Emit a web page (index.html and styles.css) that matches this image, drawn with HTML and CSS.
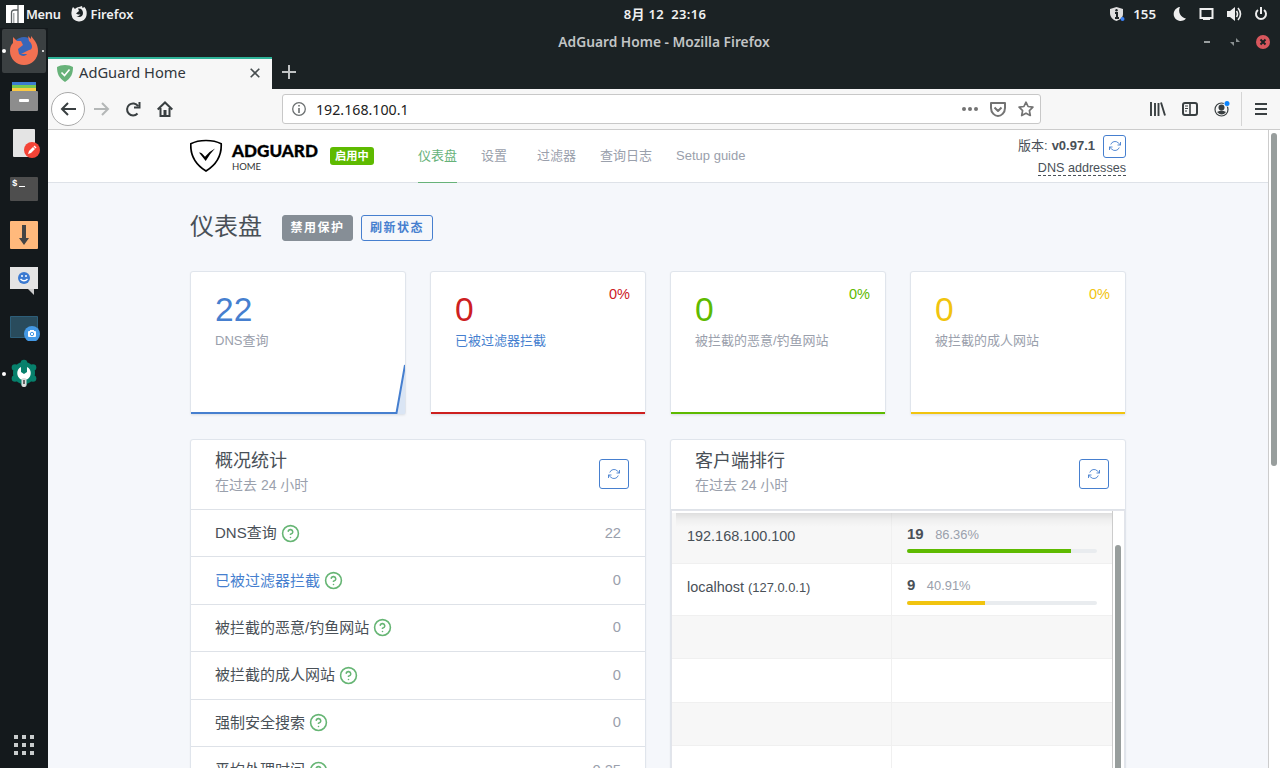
FILE: index.html
```html
<!DOCTYPE html>
<html lang="zh-CN">
<head>
<meta charset="utf-8">
<title>AdGuard Home</title>
<link rel="stylesheet" href="styles.css">
</head>
<body>
<svg width="0" height="0" class="defs">
  <symbol id="refresh" viewBox="0 0 24 24"><path d="M23 4v6h-6M1 20v-6h6M3.500 9a9 9 0 0 1 14.900-3.400L23 10M1 14l4.600 4.400A9 9 0 0 0 20.500 15" fill="none" stroke="currentColor" stroke-width="1.800"/></symbol>
  <symbol id="help" viewBox="0 0 24 24"><g fill="none" stroke="#66b574" stroke-width="2" stroke-linecap="round"><circle cx="12" cy="12" r="10"/><path d="M9.100 9a3 3 0 0 1 5.800 1c0 2-3 3-3 3M12 17h.01"/></g></symbol>
</svg>
<div class="desktop">
  <header class="panel">
    <div class="panel-left">
      <svg class="manjaro" viewBox="0 0 18 18"><path fill="#fff" d="M0 0h18v18H0z"/><path d="M5.500 18V8q0-3 3-3H12M12 0v18" fill="none" stroke="#5b6163" stroke-width="1.300"/><path fill="#a9adae" d="M7 8h1.500v10H7z"/></svg>
      <span class="menu-label">Menu</span>
      <svg class="fox-mono" viewBox="0 0 16 16"><path fill="#eee" d="M1 3l1-2 2 2c1-1 2-2 4-2l3-1 .5 2 2-1C16 4 16 7 15.400 10A7.600 7.600 0 0 1 .6 9C0 6 1 5 1 3z"/><path fill="#1b2224" d="M7 2.500C10 2 12 4 12 7c0 4-4 5-6.500 3 2 .5 3-.5 4-1.500H7L5 7.500 8 5z"/></svg>
      <span>Firefox</span>
    </div>
    <div class="clock">8月 12&nbsp; 23:16</div>
    <div class="panel-right">
      <svg width="16" height="16" viewBox="0 0 16 16"><path fill="#ddd" d="M7.500 1L14 3v5c0 4-4 6-6.500 7C4 14 1 11 1 7V3z"/><path d="M6 7h2v5M6 12h4" stroke="#1b2224" stroke-width="2" fill="none"/><circle cx="7.500" cy="4.200" r="1.200" fill="#1b2224"/><circle cx="13.500" cy="13" r="2" fill="#3b82f6"/></svg>
      <span class="count">155</span>
      <svg width="14" height="16" viewBox="0 0 14 16"><path fill="#eee" d="M7 1A8 8 0 0 0 13 12.500 7 7 0 1 1 7 1z"/></svg>
      <svg width="15" height="16" viewBox="0 0 15 16"><path d="M1.500 3h12v9h-12zM4 13h7" fill="none" stroke="#eee" stroke-width="2"/></svg>
      <svg width="16" height="16" viewBox="0 0 16 16"><path fill="#eee" d="M1 5h3l5-4v14l-5-4H1z"/><path d="M10.500 5q2 3 0 6M12 2q5 6 0 12" fill="none" stroke="#eee" stroke-width="1.600"/></svg>
      <svg width="14" height="16" viewBox="0 0 14 16"><path d="M4 4a5 5 0 1 0 6 0M7 1v7" fill="none" stroke="#eee" stroke-width="2"/></svg>
    </div>
  </header>
  <div class="body">
    <aside class="dock">
      <div class="slot active"><i class="dot"></i><i class="dot small"></i><svg width="28" height="29" viewBox="0 0 28 29"><circle cx="14" cy="13" r="12" fill="#3866b8"/><path fill="#f27152" d="M3 7V1l4 4h4l2 4-5 4 1 5c3 3 7 2 8 0h-6l8-4c4 0 4-6 0-9l-1-5 3 3V0c4 5 7 8 7 15A14 14 0 0 1 0 15c0-4 1-6 3-8z"/></svg></div>
      <div class="slot"><svg width="28" height="30" viewBox="0 0 28 30"><path fill="#3c7bd0" d="M2 1h24v4H2z"/><path fill="#78c850" d="M2 4h24v3H2z"/><path fill="#fbc944" d="M2 7h24v4H2z"/><rect y="10" width="28" height="20" rx="1" fill="#8d8d8d"/><rect x="9" y="18" width="10" height="3" rx="1" fill="#fff"/></svg></div>
      <div class="slot"><svg class="drop" width="32" height="30" viewBox="0 0 32 30"><rect x="5" y="1" width="22" height="28" rx="1" fill="#e4e4e4"/><circle cx="24" cy="22" r="8" fill="#f44336"/><path d="M20 26l1-3 4-4 2 2-4 4zM25.500 18.500l1-1 2 2-1 1z" fill="#fff"/></svg></div>
      <div class="slot"><svg width="28" height="24" viewBox="0 0 28 24"><rect width="28" height="24" rx="1" fill="#4e4e4e"/><text x="2" y="9" class="prompt">$</text><path d="M9 9.500h6" stroke="#fff"/></svg></div>
      <div class="slot"><svg width="28" height="28" viewBox="0 0 28 28"><rect width="28" height="28" rx="1" fill="#ffb97c"/><path d="M12 4h4v13h3l-5 7-5-7h3z" fill="#444"/></svg></div>
      <div class="slot"><svg width="28" height="28" viewBox="0 0 28 28"><path d="M0 0h28v22H0z" fill="#e4e4e4"/><path d="M18 22h6v6z" fill="#ccc"/><circle cx="14" cy="11" r="6" fill="#3b7ad1"/><path d="M10.500 12q3.500 3.500 7 0" fill="none" stroke="#fff" stroke-width="1.500"/><circle cx="12" cy="9" r="1" fill="#fff"/><circle cx="16" cy="9" r="1" fill="#fff"/></svg></div>
      <div class="slot"><svg width="32" height="28" viewBox="0 0 32 28"><path d="M2.500 3.500h27v21h-27z" fill="#294b5c" stroke="#2d5e79"/><circle cx="24" cy="21" r="8" fill="#4499e5"/><rect x="20" y="18" width="8" height="6" rx="1" fill="#fff"/><path d="M22 17h4v2h-4z" fill="#fff"/><circle cx="24" cy="21" r="1.700" fill="#fff" stroke="#4499e5"/></svg></div>
      <div class="slot"><i class="dot"></i><svg class="drop" width="28" height="30" viewBox="0 0 28 30"><circle cx="14" cy="14" r="11" fill="#07806c"/><g fill="#07806c"><circle cx="14" cy="4" r="3.300"/><circle cx="5" cy="8.500" r="3.300"/><circle cx="23" cy="8.500" r="3.300"/><circle cx="5" cy="19.500" r="3.300"/><circle cx="23" cy="19.500" r="3.300"/><circle cx="14" cy="24" r="3.300"/></g><path d="M11 8v5l3 2 3-2V8c5 2 5 10 0 12.500h-6C6 18 6 10 11 8z" fill="#fff"/><rect x="11.500" y="19" width="5" height="9" rx="2" fill="#ddd"/><path d="M14 21v4" stroke="#666" stroke-width="2"/></svg></div>
      <svg class="apps" width="20" height="20" viewBox="0 0 20 20"><path d="M0 2h20M0 10h20M0 18h20" stroke="#c9cccd" stroke-width="4" stroke-dasharray="4 4"/></svg>
    </aside>
    <main class="window">
      <div class="titlebar"><span>AdGuard Home - Mozilla Firefox</span>
        <svg class="controls" width="70" height="14" viewBox="0 0 70 14"><path d="M4 7h6" stroke="#9a9fa0" stroke-width="2"/><path d="M36 3v4h4zM34 11V7h-4z" fill="#8b9192"/><circle cx="63" cy="7" r="7" fill="#d8575d"/><path d="M60.500 4.500l5 5m0-5l-5 5" stroke="#1b2224" stroke-width="2"/></svg>
      </div>
      <div class="tabs">
        <div class="tab"><svg width="16" height="17" viewBox="0 0 16 17"><path fill="#67b279" d="M8 0q5 0 8 2c0 7-2 11-8 15C2 13 0 9 0 2q3-2 8-2z"/><path d="M4.500 7.500L7.500 10.500 12.500 4.500" fill="none" stroke="#fff" stroke-width="1.600"/></svg><span>AdGuard Home</span><svg class="close" width="10" height="10" viewBox="0 0 10 10"><path d="M.7.7l8.600 8.600m0-8.600L.7 9.300" stroke="#474d4f" stroke-width="1.600"/></svg></div>
        <svg class="plus" width="14" height="14" viewBox="0 0 14 14"><path d="M7 0v14M0 7h14" stroke="#c0c3c4" stroke-width="2"/></svg>
      </div>
      <div class="toolbar">
        <div class="back"><svg width="16" height="14" viewBox="0 0 16 14"><path d="M8 1L2 7l6 6M2 7h14" fill="none" stroke="#393f41" stroke-width="2"/></svg></div>
        <svg class="fwd" width="16" height="14" viewBox="0 0 16 14"><path d="M8 1l6 6-6 6M14 7H0" fill="none" stroke="#b4b7b7" stroke-width="2"/></svg>
        <svg class="reload" width="16" height="16" viewBox="0 0 16 16"><path d="M13 5A6 6 0 1 0 12.500 12.500M14.500 1v5.500H9" fill="none" stroke="#393f41" stroke-width="2"/></svg>
        <svg class="home" width="16" height="16" viewBox="0 0 16 16"><path d="M.7 8.500L8 1.500l7.300 7M3.500 7v8h9V7" fill="none" stroke="#393f41" stroke-width="2"/><path d="M6.500 9h3v6h-3z" fill="#393f41"/></svg>
        <div class="url">
          <svg width="14" height="14" viewBox="0 0 14 14"><circle cx="7" cy="7" r="6.300" fill="none" stroke="#6c7071" stroke-width="1.300"/><path d="M7 6v5M7 3v1.600" stroke="#6c7071" stroke-width="1.600"/></svg>
          <span>192.168.100.1</span>
          <svg class="dots" width="16" height="4" viewBox="0 0 16 4"><g fill="#737373"><circle cx="2" cy="2" r="2"/><circle cx="8" cy="2" r="2"/><circle cx="14" cy="2" r="2"/></g></svg>
          <svg width="16" height="15" viewBox="0 0 16 15"><path d="M1 1h14v5c0 5-4 8-7 8s-7-3-7-8zM4.500 5.500L8 9l3.500-3.500" fill="none" stroke="#737373" stroke-width="2" stroke-linejoin="round"/></svg>
          <svg width="16" height="16" viewBox="0 0 16 16"><path d="M8 1.200l2.100 4.300 4.800.7-3.500 3.400.9 4.900L8 12.200l-4.300 2.300.9-4.900L1.100 6.200l4.800-.7z" fill="none" stroke="#737373" stroke-width="1.700" stroke-linejoin="round"/></svg>
        </div>
        <div class="tools">
          <svg width="16" height="14" viewBox="0 0 16 14"><path d="M1 0v14M5 1v13M8.500 1v13M11 .5L15 13.500" stroke="#393f41" stroke-width="1.900"/></svg>
          <svg width="16" height="14" viewBox="0 0 16 14"><rect x="1" y="1" width="14" height="12" rx="2" fill="none" stroke="#393f41" stroke-width="2"/><path d="M8 1v12" stroke="#393f41" stroke-width="1.600"/><path d="M3 4h3M3 6.500h3M3 9h2" stroke="#393f41"/></svg>
          <svg width="16" height="16" viewBox="0 0 16 16"><circle cx="7.500" cy="8.500" r="6.500" fill="none" stroke="#393f41" stroke-width="1.200"/><circle cx="7.500" cy="6.500" r="3" fill="#393f41"/><path d="M3 11q4.500-3 9 0-4 5-9 0z" fill="#393f41"/><circle cx="13" cy="2.500" r="3.200" fill="#f7f7f7"/><circle cx="13" cy="2.500" r="2.500" fill="#0a84ff"/></svg>
          <i class="sep"></i>
          <svg width="12" height="12" viewBox="0 0 12 12"><path d="M0 1h12M0 6h12M0 11h12" stroke="#393f41" stroke-width="2"/></svg>
        </div>
      </div>
      <div class="viewport">
        <div class="page">
          <div class="site-head"><div class="container head-row">
            <svg class="logo" width="130" height="34" viewBox="0 0 130 34"><path d="M16 1.500q9 0 15.200 3.300Q32 22 16 32 0 22 .8 4.800 7 1.500 16 1.500z" fill="none" stroke="#000" stroke-width="1.700"/><path d="M9 13.500q2 0 3 1l3 3.200Q19 12.500 25 9.500q-5 5-9.300 12.500z"/><text x="42" y="18.300" class="brand" textLength="86" lengthAdjust="spacingAndGlyphs">ADGUARD</text><text x="42" y="30.500" class="brand-sub" textLength="29" lengthAdjust="spacing">HOME</text></svg>
            <span class="badge">启用中</span>
            <nav class="nav"><a class="on">仪表盘</a><a>设置</a><a>过滤器</a><a>查询日志</a><a>Setup guide</a></nav>
            <div class="version"><div class="ver-row">版本: <b>v0.97.1</b><span class="rbtn mini"><svg width="12" height="12"><use href="#refresh"/></svg></span></div><span class="addr">DNS addresses</span></div>
          </div></div>
          <div class="container">
            <div class="page-title"><h1>仪表盘</h1><span class="btn gray">禁用保护</span><span class="btn outline">刷新状态</span></div>
            <div class="stats">
              <div class="card stat blue"><div class="num">22</div><div class="lbl">DNS查询</div><svg class="chart" viewBox="0 0 214 50" width="214" height="50"><path d="M205.500 49L214 1V50H205z" fill="#dae5f4"/><path d="M0 49h205.500L214 1" fill="none" stroke="#467fcf" stroke-width="2"/></svg></div>
              <div class="card stat red"><div class="pct">0%</div><div class="num">0</div><div class="lbl link">已被过滤器拦截</div><div class="line"></div></div>
              <div class="card stat green"><div class="pct">0%</div><div class="num">0</div><div class="lbl">被拦截的恶意/钓鱼网站</div><div class="line"></div></div>
              <div class="card stat yellow"><div class="pct">0%</div><div class="num">0</div><div class="lbl">被拦截的成人网站</div><div class="line"></div></div>
            </div>
            <div class="panels">
              <section class="card box">
                <div class="box-head"><div><h2>概况统计</h2><p>在过去 24 小时</p></div><span class="rbtn"><svg width="12" height="12"><use href="#refresh"/></svg></span></div>
                <div class="row"><span>DNS查询</span><svg class="q"><use href="#help"/></svg><em>22</em></div>
                <div class="row"><span class="link">已被过滤器拦截</span><svg class="q"><use href="#help"/></svg><em>0</em></div>
                <div class="row"><span>被拦截的恶意/钓鱼网站</span><svg class="q"><use href="#help"/></svg><em>0</em></div>
                <div class="row"><span>被拦截的成人网站</span><svg class="q"><use href="#help"/></svg><em>0</em></div>
                <div class="row"><span>强制安全搜索</span><svg class="q"><use href="#help"/></svg><em>0</em></div>
                <div class="row"><span>平均处理时间</span><svg class="q"><use href="#help"/></svg><em>0.25</em></div>
              </section>
              <section class="card box">
                <div class="box-head"><div><h2>客户端排行</h2><p>在过去 24 小时</p></div><span class="rbtn"><svg width="12" height="12"><use href="#refresh"/></svg></span></div>
                <div class="table">
                  <div class="rows">
                    <div class="tr first odd"><div class="td">192.168.100.100</div><div class="td"><div class="val"><b>19</b><small>86.36%</small></div><div class="bar"><i class="g" style="width:86.36%"></i></div></div></div>
                    <div class="tr second"><div class="td">localhost&nbsp;<small>(127.0.0.1)</small></div><div class="td"><div class="val"><b>9</b><small>40.91%</small></div><div class="bar"><i class="y" style="width:40.91%"></i></div></div></div>
                    <div class="tr odd"><div class="td"></div><div class="td"></div></div>
                    <div class="tr"><div class="td"></div><div class="td"></div></div>
                    <div class="tr odd"><div class="td"></div><div class="td"></div></div>
                    <div class="tr"><div class="td"></div><div class="td"></div></div>
                  </div>
                  <div class="inner-scroll"><i></i></div>
                </div>
              </section>
            </div>
          </div>
        </div>
        <div class="scroll"><i></i></div>
      </div>
    </main>
  </div>
</div>
</body>
</html>
```
FILE: styles.css
```css
* { box-sizing: border-box; }
body { margin: 0; width: 1280px; height: 768px; overflow: hidden; font-family: "Liberation Sans", "Noto Sans CJK SC", sans-serif; }
svg { display: block; flex: none; }
.defs { position: absolute; }
h1, h2, p { margin: 0; font-weight: 400; }
em, i { font-style: normal; }
.desktop { height: 768px; display: flex; flex-direction: column; background: #1b2224; }

.panel { height: 28px; flex: none; display: grid; grid-template-columns: 1fr auto 1fr; align-items: center; padding: 0 12px 0 6px; color: #f0f1f1; font: 600 12.800px/28px "Noto Sans", "Noto Sans CJK SC", sans-serif; }
.panel-left { display: flex; align-items: center; }
.manjaro { width: 18px; height: 18px; }
.menu-label { margin: 0 10px 0 2px; letter-spacing: -.3px; }
.fox-mono { width: 16px; height: 16px; margin-right: 4px; }
.clock { position: relative; left: 28px; font-size: 13px; letter-spacing: .3px; }
.panel-right { display: flex; align-items: center; justify-content: flex-end; gap: 12px; }
.count { margin: 0 5px 0 -4px; font-size: 13.300px; }

.body { flex: 1; display: flex; min-height: 0; }
.dock { width: 48px; flex: none; background: #14191c; display: flex; flex-direction: column; align-items: center; padding-top: 1px; }
.slot { position: relative; width: 44px; height: 44px; margin: 0 0 2.200px 0; display: flex; align-items: center; justify-content: center; border-radius: 2px; padding-bottom: 2px; }
.slot.active { background: #3b4042; }
.slot .dot { position: absolute; left: 0; top: 20px; width: 4px; height: 4px; border-radius: 50%; background: #fff; }
.slot .dot.small { left: auto; right: 2px; top: 21px; width: 2px; height: 2px; }
.drop { margin-top: 2px; }
.prompt { font: 700 9px "Liberation Mono", monospace; fill: #fff; }
.apps { margin: auto 0 13px; }

.window { flex: 1; min-width: 0; display: flex; flex-direction: column; }
.titlebar { height: 29px; flex: none; display: flex; align-items: flex-start; justify-content: center; color: #c2c5c6; font: 600 13.750px/27px "Noto Sans", sans-serif; position: relative; }
.controls { position: absolute; right: 10px; top: 7px; }
.tabs { height: 32px; flex: none; display: flex; align-items: center; }
.tab { width: 224px; height: 32px; background: #f7f7f7; border-top: 2px solid #2eb398; display: flex; align-items: center; padding: 0 12px 2px 9px; color: #31363b; font: 14.700px "Noto Sans", sans-serif; }
.tab span { margin: -2px 0 0 6px; }
.close { margin-left: auto; }
.plus { margin: -2px 0 0 10px; }
.toolbar { height: 41px; flex: none; background: #f7f7f7; border-bottom: 1px solid #ccc; display: flex; align-items: center; padding-left: 3px; }
.back { width: 34px; height: 34px; border: 1px solid #aaa; border-radius: 50%; background: #fff; display: flex; align-items: center; justify-content: center; }
.fwd { margin-left: 9px; }
.reload { margin-left: 15px; }
.home { margin-left: 16px; }
.url { margin-left: 109px; width: 759px; height: 30px; background: #fff; border: 1px solid #c8c8c8; border-radius: 3px; display: flex; align-items: center; gap: 12px; padding: 0 6px 0 9px; font: 14.200px "Noto Sans", sans-serif; color: #222; }
.url span { margin-left: -2px; }
.dots { margin-left: auto; }
.tools { margin-left: 109px; flex: 1; display: flex; align-items: center; gap: 16px; }
.sep { width: 1px; height: 34px; background: #d5d5d5; margin: 0 -3px 0 -5px; }

.viewport { flex: 1; min-height: 0; display: flex; background: #f5f7fb; }
.page { flex: 1; overflow: hidden; color: #495057; }
.scroll { width: 12px; background: #fff; border-left: 1px solid #ccc; padding: 3px 0 0 2px; }
.scroll i { display: block; width: 6px; height: 333px; border-radius: 3px; background: #989e9d; }
.container { width: 936px; margin-left: 142px; }
.site-head { height: 53px; background: #fff; border-bottom: 1px solid #dee2e8; }
.head-row { display: flex; height: 53px; }
.logo { margin-top: 9px; }
.brand { font: 900 17px Lato, sans-serif; stroke: #000; stroke-width: .3px; }
.brand-sub { font: 400 9.500px Lato, sans-serif; fill: #333; }
.badge { margin: 17px 0 0 10px; width: 44px; height: 18px; border-radius: 3px; background: #5eba00; color: #fff; font-size: 11.250px; font-weight: 700; line-height: 18px; text-align: center; }
.nav { display: flex; margin-left: 44px; gap: 24px; font-size: 13px; color: #9aa0ac; line-height: 51px; height: 53px; }
.nav a:nth-child(3) { margin-left: 6px; }
.nav .on { color: #67b279; border-bottom: 1px solid #67b279; }
.version { margin-left: auto; text-align: right; font-size: 13px; line-height: 16px; padding-top: 4px; }
.ver-row { display: flex; align-items: center; gap: 4px; height: 24px; }
.rbtn { width: 30px; height: 30px; border: 1px solid #467fcf; border-radius: 3px; color: #467fcf; display: flex; align-items: center; justify-content: center; background: #fff; }
.rbtn.mini { width: 23px; height: 23px; margin-left: 4px; }
.addr { display: inline-block; font-size: 12.600px; line-height: 14px; border-bottom: 1px dashed #495057; margin-top: 3px; }

.page-title { display: flex; align-items: flex-start; padding-top: 32px; height: 88px; }
h1 { font-size: 24px; line-height: 24px; margin-right: 20px; }
.btn { height: 26px; border-radius: 3px; font-size: 12px; font-weight: 700; line-height: 24px; letter-spacing: 1.500px; text-align: center; border: 1px solid #868e96; }
.gray { width: 71px; background: #868e96; color: #fff; margin-right: 8px; }
.outline { width: 72px; border-color: #467fcf; color: #467fcf; }

.card { background: #fff; border: 1px solid #e0e5ec; border-radius: 3px; box-shadow: 0 1px 2px rgba(0, 0, 0, .05); }
.stats, .panels { display: grid; grid-template-columns: repeat(4, 216px); gap: 24px; }
.stat { height: 144px; padding: 20px 0 0 24px; position: relative; }
.num { font-size: 33.500px; line-height: 36px; }
.lbl { font-size: 13px; line-height: 20px; color: #9aa0ac; margin-top: 3px; }
.link { color: #467fcf !important; }
.pct { position: absolute; right: 15px; top: 13px; font-size: 14.500px; line-height: 18px; }
.line { position: absolute; left: 0; right: 0; bottom: 0; height: 2px; background: currentColor; }
.chart { position: absolute; left: 0; bottom: 0; }
.blue { color: #467fcf; }
.red { color: #cd201f; }
.green { color: #5eba00; }
.yellow { color: #f1c40f; }

.panels { grid-template-columns: 456px 456px; margin-top: 24px; }
.box { height: 400px; }
.box-head { height: 70px; display: flex; justify-content: space-between; padding: 19px 16px 0 24px; border-bottom: 1px solid #dee2e8; }
.box-head > div { margin-top: -11px; }
h2 { font-size: 18px; line-height: 26px; }
p { font-size: 14px; line-height: 22px; color: #9aa0ac; }
.row { display: flex; align-items: center; height: 47.400px; padding: 0 24px; border-bottom: 1px solid #dee2e8; font-size: 15px; }
.row span { margin-bottom: 3px; }
.row em { margin-left: auto; color: #9aa0ac; font-size: 14.700px; margin-bottom: 1px; }
.q { width: 19px; height: 19px; margin-left: 4px; }
.table { display: flex; height: 330px; border: 2px solid #e2e4ea; border-width: 1px 1px 0 1px; }
.rows { flex: 1; position: relative; padding-top: 2px; }
.rows::before { content: ""; position: absolute; left: 4px; right: 0; top: 2px; height: 14px; background: linear-gradient(rgba(0, 0, 0, .1), rgba(0, 0, 0, .03) 50%, transparent); }
.tr { display: flex; height: 43.400px; border-bottom: 1px solid #f0f0f0; }
.odd { background: #f7f7f7; }
.first { height: 51px; }
.second { height: 52px; }
.td { flex: 0 0 219px; padding: 0 15px 5px; font-size: 14.450px; display: flex; align-items: center; }
.td + .td { flex: 1; display: block; padding-top: 12px; border-left: 1px solid #f0f0f0; }
.td small { font-size: 12.900px; }
.td b { font-size: 15px; }
.val { line-height: 18px; }
.val small { margin-left: 11.500px; color: #9aa0ac; }
.bar { height: 4px; margin-top: 5px; border-radius: 2px; background: #e9ecef; overflow: hidden; }
.second .bar { margin-top: 6px; }
.bar i { display: block; height: 100%; }
.g { background: #5eba00; }
.y { background: #f1c40f; }
.inner-scroll { width: 12px; border-left: 1px solid #ccc; padding: 34px 0 0 2px; }
.inner-scroll i { display: block; width: 6px; height: 300px; border-radius: 3px; background: #989e9d; }
```
